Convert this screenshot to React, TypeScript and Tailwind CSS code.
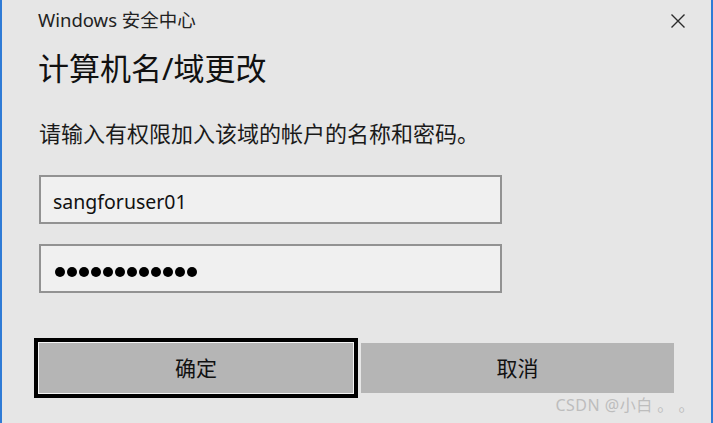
import React from "react";

const font = { fontFamily: '"Noto Sans", "Noto Sans CJK SC", sans-serif' };

export default function App() {
  const dots = Array.from({ length: 12 });
  return (
    <div
      className="relative w-[713px] h-[423px] bg-[#e6e6e6] border-x-2 border-[#2f7bd6] flex flex-col overflow-hidden text-[#1a1a1a]"
      style={font}
    >
      <div className="h-[40px] flex items-center justify-between pl-[36px] pr-[25px]">
        <span className="text-[18.5px] leading-[24px] text-[#222]">Windows 安全中心</span>
        <svg width="16" height="16" viewBox="0 0 16 16" className="mt-[1px]">
          <path d="M1.5 1.5 L14.5 14.5 M14.5 1.5 L1.5 14.5" stroke="#2a2a2a" strokeWidth="1.4" fill="none" />
        </svg>
      </div>

      <div className="ml-[36px] mt-[10px] h-[36px] text-[31px] leading-[36px] text-[#111]">
        计算机名/域更改
      </div>

      <div className="ml-[37px] mt-[33px] h-[28px] text-[22px] leading-[28px] text-[#1a1a1a]">
        请输入有权限加入该域的帐户的名称和密码。
      </div>

      <div className="ml-[37px] mt-[28px] w-[463px] h-[49px] border-2 border-[#929292] bg-[#f0f0f0] flex items-center pl-[12px] pt-[4px]">
        <span className="text-[19.5px] leading-[24px] text-[#111]">sangforuser01</span>
      </div>

      <div className="ml-[37px] mt-[20px] w-[463px] h-[49px] border-2 border-[#929292] bg-[#f0f0f0] flex items-center pl-[14px] pt-[6px] gap-[2px]">
        {dots.map((_, i) => (
          <div key={i} className="w-[10px] h-[10px] rounded-full bg-black" />
        ))}
      </div>

      <div className="ml-[32px] mt-[45px] flex items-center">
        <div className="w-[324px] h-[60px] border-[4px] border-black">
          <div className="w-full h-full border border-[#f4f4f4] bg-[#b5b5b5] flex items-center justify-center">
            <span className="text-[21px] leading-[26px] text-[#111]">确定</span>
          </div>
        </div>
        <div className="ml-[3px] w-[313px] h-[50px] bg-[#b5b5b5] flex items-center justify-center">
          <span className="text-[21px] leading-[26px] text-[#111]">取消</span>
        </div>
      </div>

      <div className="absolute right-[16px] bottom-[8px] text-[16px] leading-[20px] text-[#bdbdbd] tracking-[0.5px]">
        CSDN @小白 。 。
      </div>
    </div>
  );
}
